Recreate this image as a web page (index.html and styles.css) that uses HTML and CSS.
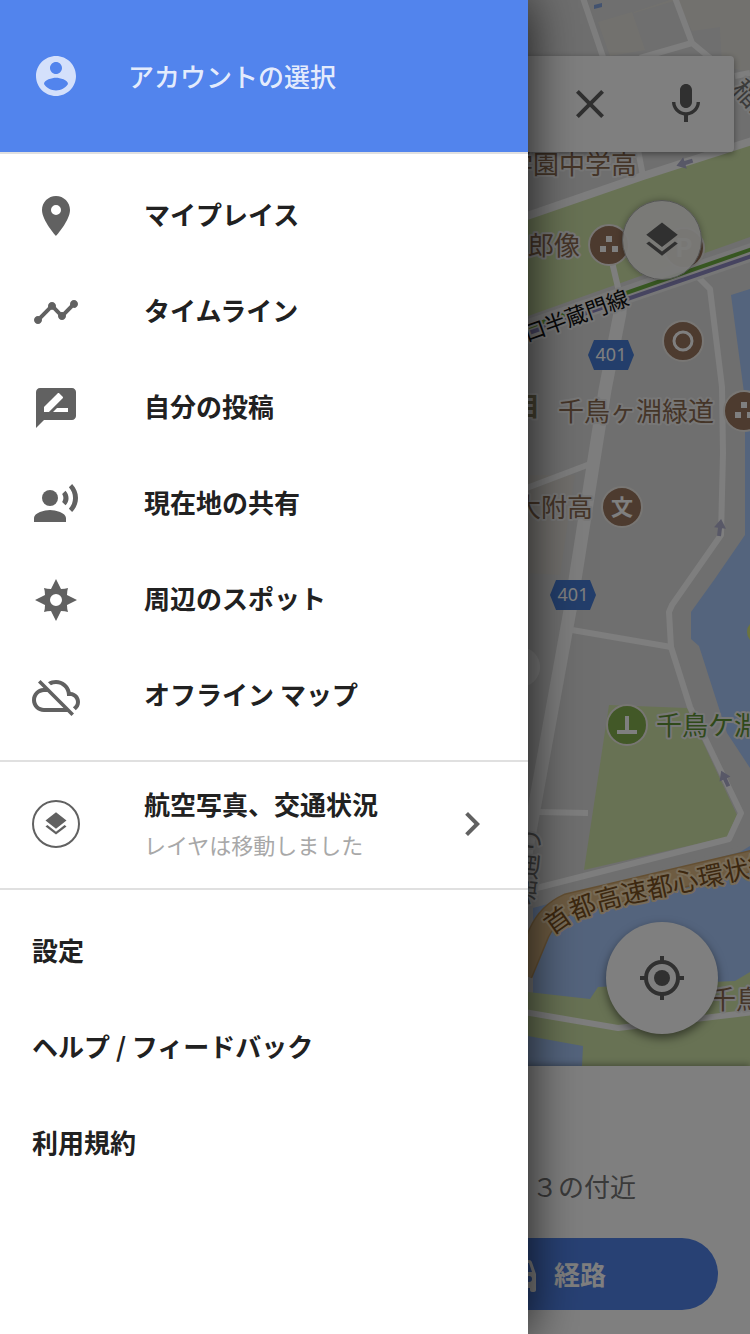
FILE: index.html
```html
<!DOCTYPE html>
<html lang="ja">
<head>
<meta charset="utf-8">
<meta name="viewport" content="width=device-width, initial-scale=1">
<title>マップ</title>
<link rel="stylesheet" href="styles.css">
</head>
<body>
<div class="app">
  <main class="page">
    <section class="map-area">
      <svg class="map" viewBox="0 0 750 1066" preserveAspectRatio="xMaxYMin slice" role="img" aria-label="地図">
        <defs>
          <g id="blocks">
            <path d="M-3 -9h6v6h-6zM-9 1h6v6h-6zM3 1h6v6h-6z" fill="#fff"/>
          </g>
          <path id="arrow" d="M0 -9L6 0H2V8H-2V0H-6Z" fill="#b0b0ce"/>
          <path id="shield" d="M-17 -15H17L23 0L17 15H-17L-23 0Z" fill="#467cd6"/>
          <path id="expressway" d="M553 936Q568 922 590 914Q610 907 640 901L820 862"/>
        </defs>
        <rect width="750" height="1066" fill="#dedede"/>
        <path d="M598 22L632 12L645 50L610 56ZM634 12L670 0H750V72L722 66L720 27L692 31L677 0L634 13Z" fill="#e5e3dc"/>
        <path d="M528 475H575L560 575L528 573Z" fill="#e2dfd8"/>
        <path d="M594 5L602 3V7L594 9Z" fill="#86a6e0"/>
        <path d="M528 216L750 143V237L528 316Z" fill="#d0e4a8"/>
        <path d="M731 295L750 289V768L727 733L715 696L699 646L691 639V612L714 580L745 535V400Z" fill="#a8c8fa"/>
        <circle cx="759" cy="632" r="12" fill="#d8e87c"/>
        <path d="M609 705L687 708L737 815L727 837L584 870Z" fill="#d0e4a8"/>
        <path d="M533 1000V908L740 852L750 846V1010Z" fill="#a8c8fa"/>
        <path d="M528 992L590 999L598 987L735 981L750 972V1066H528Z" fill="#d0e4a8"/>
        <path d="M528 1036L583 1046L582 1066H528Z" fill="#a8c8fa"/>
        <path d="M528 885L728 838L741 846L528 908Z" fill="#dedede"/>
        <g class="roads">
          <path d="M582 -5L604 60M674 -5L692 43L715 62M692 43L640 58M735 76L750 73M638 150L643 176M612 262L621 300"/>
          <path d="M524 217L643 176L755 140" class="road-medium"/>
          <path d="M621 290L620 313L605 390L571 605L542 765L515 915" class="road-main"/>
          <path d="M697 276L710 289L722 387L723 453L721 535L672 605L669 612L671 647L690 707L741 813L729 839L525 891"/>
          <path d="M524 489L590 464M572 630L671 647M538 812L588 813M524 1012L618 1028L755 1012"/>
        </g>
        <path d="M520 331L755 251" class="rail-case"/>
        <path d="M520 330L755 248" class="rail-green"/>
        <path d="M520 336L755 255" class="rail-purple"/>
        <path d="M760 859L568 904Q548 913 539 933L522 974" class="highway-case"/>
        <path d="M760 859L568 904Q548 913 539 933L522 974" class="highway"/>
        <use href="#arrow" transform="translate(685 163) rotate(-108)"/>
        <use href="#arrow" transform="translate(720 528) rotate(7)"/>
        <use href="#arrow" transform="translate(725 779) rotate(-25)"/>
        <circle cx="520" cy="667" r="20" fill="#f4f4f4"/>
        <g class="poi">
          <circle cx="609" cy="245" r="20"/>
          <circle cx="684" cy="248" r="20"/>
          <circle cx="683" cy="341" r="20"/>
          <circle cx="744" cy="411" r="20"/>
          <circle cx="622" cy="507" r="20"/>
          <circle cx="627" cy="725" r="20" class="poi-park"/>
        </g>
        <use href="#blocks" x="609" y="245"/>
        <use href="#blocks" x="744" y="411"/>
        <circle cx="683" cy="341" r="9" fill="none" stroke="#fff" stroke-width="3"/>
        <path d="M625 716h4v14h8v4h-20v-4h8z" fill="#fff"/>
        <text x="684" y="257" class="poi-text">P</text>
        <text x="622" y="515" class="poi-text poi-school">文</text>
        <use href="#shield" x="611" y="355"/>
        <use href="#shield" x="573" y="595"/>
        <text x="611" y="361" class="shield-text">401</text>
        <text x="573" y="601" class="shield-text">401</text>
        <g class="label">
          <text x="507" y="174">学園中学高</text>
          <text x="528" y="255">郎像</text>
          <text x="558" y="421">千鳥ヶ淵緑道</text>
          <text x="515" y="517">大附高</text>
          <text x="710" y="1009">千鳥</text>
          <text x="656" y="735" class="label-park">千鳥ケ淵</text>
          <text x="514" y="416" class="label-area">目</text>
          <text class="label-road"><textPath href="#expressway">首都高速都心環状線</textPath></text>
        </g>
        <g class="label label-dark">
          <text transform="translate(527 342) rotate(-20)" class="label-rail">口半蔵門線</text>
          <text transform="translate(533 906) rotate(-84)">堀通り</text>
          <text transform="translate(731 90) rotate(47)">稲田</text>
        </g>
      </svg>
      <div class="map-controls">
        <div class="search-bar">
          <button class="icon-button" aria-label="閉じる">
            <svg class="icon" viewBox="0 0 24 24"><path d="M19 6.41L17.59 5 12 10.59 6.41 5 5 6.41 10.59 12 5 17.59 6.41 19 12 13.41 17.59 19 19 17.59 13.41 12z"/></svg>
          </button>
          <button class="icon-button" aria-label="音声検索">
            <svg class="icon" viewBox="0 0 24 24"><path d="M12 14c1.66 0 3-1.34 3-3V5c0-1.66-1.34-3-3-3S9 3.34 9 5v6c0 1.66 1.34 3 3 3zm5.3-3c0 3-2.54 5.1-5.3 5.1S6.7 14 6.7 11H5c0 3.41 2.72 6.23 6 6.72V21h2v-3.28c3.28-.48 6-3.3 6-6.72h-1.7z"/></svg>
          </button>
        </div>
        <button class="round-button layers-button" aria-label="レイヤ">
          <svg class="icon icon-layers" viewBox="0 0 24 24"><path d="M12 18.54l-7.37-5.73L3 14.07l9 7 9-7-1.63-1.27zM12 16l7.36-5.73L21 9l-9-7-9 7 1.63 1.27z"/></svg>
        </button>
        <button class="round-button locate-button" aria-label="現在地">
          <svg class="icon" viewBox="0 0 24 24"><circle cx="12" cy="12" r="4"/><circle cx="12" cy="12" r="8" fill="none" stroke="currentColor" stroke-width="2"/><path d="M11 1h2v3h-2zM11 20h2v3h-2zM1 11h3v2H1zM20 11h3v2h-3z"/></svg>
        </button>
      </div>
    </section>
    <section class="sheet">
      <p class="sheet-text">３の付近</p>
      <button class="route-button">
        <svg class="icon" viewBox="0 0 24 24"><path d="M18.92 6.01C18.72 5.42 18.16 5 17.5 5h-11c-.66 0-1.21.42-1.42 1.01L3 12v8c0 .55.45 1 1 1h1c.55 0 1-.45 1-1v-1h12v1c0 .55.45 1 1 1h1c.55 0 1-.45 1-1v-8l-2.08-5.99zM6.5 16a1.5 1.5 0 1 1 0-3 1.5 1.5 0 0 1 0 3zm11 0a1.5 1.5 0 1 1 0-3 1.5 1.5 0 0 1 0 3zM5 11l1.5-4.5h11L19 11H5z"/></svg>
        <span>経路</span>
      </button>
    </section>
  </main>
  <div class="scrim"></div>
  <aside class="drawer">
    <button class="account">
      <svg class="icon" viewBox="0 0 24 24"><path d="M12 2C6.48 2 2 6.48 2 12s4.48 10 10 10 10-4.48 10-10S17.52 2 12 2zm0 3c1.66 0 3 1.34 3 3s-1.34 3-3 3-3-1.34-3-3 1.34-3 3-3zm0 14.2c-2.5 0-4.71-1.28-6-3.22.03-1.99 4-3.08 6-3.08s5.97 1.09 6 3.08c-1.29 1.94-3.5 3.22-6 3.22z"/></svg>
      <span>アカウントの選択</span>
    </button>
    <nav class="menu">
      <a class="item" href="#places">
        <svg class="icon" viewBox="0 0 24 24"><path d="M12 2C8.13 2 5 5.13 5 9c0 5.25 7 13 7 13s7-7.75 7-13c0-3.87-3.13-7-7-7zm0 9.5a2.5 2.5 0 1 1 0-5 2.5 2.5 0 0 1 0 5z"/></svg>
        <span>マイプレイス</span>
      </a>
      <a class="item" href="#timeline">
        <svg class="icon" viewBox="0 0 24 24"><path d="M23 8c0 1.1-.9 2-2 2-.18 0-.35-.02-.51-.07l-3.56 3.55c.05.16.07.34.07.52 0 1.1-.9 2-2 2s-2-.9-2-2c0-.18.02-.36.07-.52l-2.55-2.55c-.16.05-.34.07-.52.07s-.36-.02-.52-.07l-4.55 4.56c.05.16.07.33.07.51 0 1.1-.9 2-2 2s-2-.9-2-2 .9-2 2-2c.18 0 .35.02.51.07l4.56-4.55C8.02 9.36 8 9.18 8 9c0-1.1.9-2 2-2s2 .9 2 2c0 .18-.02.36-.07.52l2.55 2.55c.16-.05.34-.07.52-.07s.36.02.52.07l3.55-3.56C19.02 8.35 19 8.18 19 8c0-1.1.9-2 2-2s2 .9 2 2z"/></svg>
        <span>タイムライン</span>
      </a>
      <a class="item" href="#contributions">
        <svg class="icon" viewBox="0 0 24 24"><path d="M20 2H4c-1.1 0-1.99.9-1.99 2L2 22l4-4h14c1.1 0 2-.9 2-2V4c0-1.1-.9-2-2-2zM6 14v-2.47l6.88-6.88c.2-.2.51-.2.71 0l1.77 1.77c.2.2.2.51 0 .71L8.47 14H6zm12 0h-7.5l2-2H18v2z"/></svg>
        <span>自分の投稿</span>
      </a>
      <a class="item" href="#sharing">
        <svg class="icon" viewBox="0 0 24 24"><circle cx="9" cy="9" r="4"/><path d="M9 15c-2.67 0-8 1.34-8 4v2h16v-2c0-2.66-5.33-4-8-4zM16.76 5.36l-1.68 1.69c.84 1.18.84 2.71 0 3.89l1.68 1.69c2.02-2.02 2.02-5.07 0-7.27zM20.07 2l-1.63 1.63c2.77 3.02 2.77 7.56 0 10.74L20.07 16c3.9-3.89 3.91-9.95 0-14z"/></svg>
        <span>現在地の共有</span>
      </a>
      <a class="item" href="#explore">
        <svg class="icon" viewBox="0 0 48 48"><path fill-rule="evenodd" d="M24 3L29 13Q33 13 36 12Q35 15 35 19L45 24L35 29Q35 33 36 36Q33 35 29 35L24 45L19 35Q15 35 12 36Q13 33 13 29L3 24L13 19Q13 15 12 12Q15 13 19 13ZM24 18a6 6 0 1 0 0 12a6 6 0 1 0 0 -12Z"/></svg>
        <span>周辺のスポット</span>
      </a>
      <a class="item" href="#offline">
        <svg class="icon" viewBox="0 0 24 24"><path d="M19.35 10.04C18.67 6.59 15.64 4 12 4c-1.48 0-2.85.43-4.01 1.17l1.46 1.46C10.21 6.23 11.08 6 12 6c3.04 0 5.5 2.46 5.5 5.5v.5H19c1.66 0 3 1.34 3 3 0 1.13-.64 2.11-1.56 2.62l1.45 1.45C23.16 18.16 24 16.68 24 15c0-2.64-2.05-4.78-4.65-4.96zM3 5.27l2.75 2.74C2.56 8.15 0 10.77 0 14c0 3.31 2.69 6 6 6h11.73l2 2L21 20.73 4.27 4 3 5.27zM7.73 10l8 8H6c-2.21 0-4-1.79-4-4s1.79-4 4-4h1.73z"/></svg>
        <span>オフライン マップ</span>
      </a>
    </nav>
    <a class="layers-row" href="#layers">
      <span class="layers-badge">
        <svg class="icon icon-small" viewBox="0 0 24 24"><path d="M12 18.54l-7.37-5.73L3 14.07l9 7 9-7-1.63-1.27zM12 16l7.36-5.73L21 9l-9-7-9 7 1.63 1.27z"/></svg>
      </span>
      <span class="layers-text">
        <span class="layers-title">航空写真、交通状況</span>
        <span class="layers-note">レイヤは移動しました</span>
      </span>
      <svg class="icon" viewBox="0 0 24 24"><path d="M10 6L8.59 7.41 13.17 12l-4.58 4.59L10 18l6-6z"/></svg>
    </a>
    <nav class="menu">
      <a class="item" href="#settings"><span>設定</span></a>
      <a class="item" href="#help"><span>ヘルプ / フィードバック</span></a>
      <a class="item" href="#terms"><span>利用規約</span></a>
    </nav>
  </aside>
</div>
</body>
</html>
```
FILE: styles.css
```css
* {
  box-sizing: border-box;
}

body {
  margin: 0;
  font-family: "Noto Sans CJK JP", sans-serif;
  font-size: 26px;
  line-height: 40px;
  color: #212121;
}

button {
  border: 0;
  padding: 0;
  font: inherit;
  color: inherit;
  background: none;
}

a {
  color: inherit;
  text-decoration: none;
}

.app {
  display: grid;
  min-height: 100vh;
  overflow: hidden;
}

.page,
.scrim,
.drawer {
  grid-area: 1 / 1;
}

.icon {
  flex: none;
  display: block;
  width: 48px;
  height: 48px;
  fill: currentColor;
}

/* Map page */

.page {
  display: flex;
  flex-direction: column;
  background: #fff;
}

.map-area {
  position: relative;
  flex: 1;
  display: flex;
  overflow: hidden;
}

.map {
  position: absolute;
  inset: 0;
  width: 100%;
  height: 100%;
}

.map-controls {
  position: relative;
  flex: 1;
  display: flex;
  flex-direction: column;
  align-items: flex-end;
  padding: 56px 16px 32px;
}

.search-bar {
  align-self: stretch;
  display: flex;
  align-items: center;
  justify-content: flex-end;
  gap: 48px;
  height: 96px;
  padding: 0 24px;
  border-radius: 4px;
  background: #fff;
  box-shadow: 0 2px 6px rgba(0, 0, 0, .4);
  color: #616161;
}

.round-button {
  display: grid;
  place-items: center;
  border-radius: 50%;
  color: #616161;
}

.layers-button {
  width: 80px;
  height: 80px;
  margin: 48px 32px 0 0;
  border: 1px solid #aaa;
  background: rgba(245, 245, 242, .94);
  box-shadow: 0 0 6px rgba(0, 0, 0, .3);
}

.icon-layers {
  width: 42px;
  height: 42px;
}

.locate-button {
  width: 112px;
  height: 112px;
  margin: auto 16px 0 0;
  background: #fff;
  box-shadow: 0 4px 10px rgba(0, 0, 0, .5);
}

.sheet {
  position: relative;
  display: flex;
  flex-direction: column;
  gap: 32px;
  padding: 100px 32px 24px;
  background: #fff;
  box-shadow: 0 -2px 6px rgba(0, 0, 0, .3);
}

.sheet-text {
  margin: 0;
  align-self: flex-end;
  width: 186px;
  color: #757575;
}

.route-button {
  align-self: flex-end;
  display: flex;
  align-items: center;
  justify-content: center;
  gap: 12px;
  width: 336px;
  height: 72px;
  border-radius: 36px;
  background: #5082e8;
  color: #fff;
  font-weight: 700;
}

/* Map drawing */

.roads path {
  fill: none;
  stroke: #fcfcfc;
  stroke-width: 6;
  stroke-linejoin: round;
}

.roads .road-medium {
  stroke-width: 8;
}

.roads .road-main {
  stroke-width: 13;
}

.rail-case {
  stroke: #eee;
  stroke-width: 18;
}

.rail-green {
  stroke: #6fae42;
  stroke-width: 4;
}

.rail-purple {
  stroke: #8c88c0;
  stroke-width: 4;
}

.highway-case {
  fill: none;
  stroke: #c9a066;
  stroke-width: 22;
}

.highway {
  fill: none;
  stroke: #dcb884;
  stroke-width: 19;
}

.poi circle {
  fill: #9a765e;
  stroke: #f0ede8;
  stroke-width: 2;
}

.poi .poi-park {
  fill: #85b04f;
}

.poi-text {
  font-size: 26px;
  font-weight: 700;
  text-anchor: middle;
  fill: #fff;
}

.poi-school {
  font-size: 22px;
}

.shield-text {
  font-family: "Noto Sans", sans-serif;
  font-size: 18px;
  text-anchor: middle;
  fill: #fff;
}

.label {
  font-size: 26px;
  fill: #8a6a50;
  stroke: #eee;
  stroke-width: 4;
  stroke-linejoin: round;
  paint-order: stroke;
}

.label-park {
  fill: #5f9334;
}

.label-area {
  fill: #8a8260;
  font-weight: 700;
}

.label-road {
  fill: #7a5020;
  stroke: #f0d8b0;
}

.label-dark {
  fill: #777;
}

.label-rail {
  font-size: 22px;
  fill: #111;
}

/* Drawer */

.scrim {
  position: relative;
  background: rgba(0, 0, 0, .5);
}

.drawer {
  position: relative;
  width: 70.4%;
  background: #fff;
  box-shadow: 0 0 48px rgba(0, 0, 0, .8);
  font-weight: 700;
}

.account {
  display: flex;
  align-items: center;
  gap: 48px;
  width: 100%;
  height: 154px;
  padding: 0 32px;
  border-bottom: 2px solid #e0e0e0;
  background: #5284ed;
  color: rgba(255, 255, 255, .87);
  font-weight: 500;
}

.account .icon {
  color: #d4e0fb;
}

.menu {
  padding: 14px 0 16px;
}

.item {
  display: flex;
  align-items: center;
  gap: 64px;
  height: 96px;
  padding: 0 32px;
}

.item span {
  padding-bottom: 4px;
}

.item .icon,
.layers-row .icon {
  color: #616161;
}

.layers-row {
  display: flex;
  align-items: center;
  gap: 64px;
  height: 130px;
  padding: 0 32px 2px;
  border-top: 2px solid #e0e0e0;
  border-bottom: 2px solid #e0e0e0;
}

.layers-badge {
  flex: none;
  display: grid;
  place-items: center;
  width: 48px;
  height: 48px;
  border: 2px solid #616161;
  border-radius: 50%;
}

.layers-row .icon-small {
  width: 28px;
  height: 28px;
}

.layers-text {
  flex: 1;
  display: flex;
  flex-direction: column;
  white-space: nowrap;
}

.layers-note {
  font-size: 22px;
  font-weight: 400;
  color: #a8a8a8;
}
```
